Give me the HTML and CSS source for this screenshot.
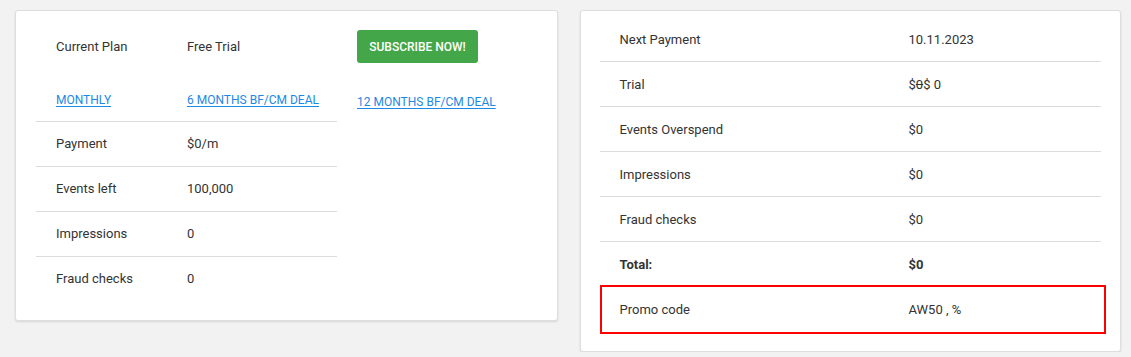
FILE: index.html
```html
<!DOCTYPE html>
<html>
<head>
<meta charset="utf-8">
<link rel="stylesheet" href="styles.css">
</head>
<body>
<div class="page">
  <div class="card plan-card">
    <div class="plan-grid">
      <div class="cell top">Current Plan</div>
      <div class="cell top">Free Trial</div>
      <div class="cell top btn-cell"><button class="btn-subscribe">SUBSCRIBE NOW!</button></div>

      <div class="cell link-row bordered"><a href="#" class="plan-link">MONTHLY</a></div>
      <div class="cell link-row bordered"><a href="#" class="plan-link">6 MONTHS BF/CM DEAL</a></div>
      <div class="cell link-row third"><a href="#" class="plan-link">12 MONTHS BF/CM DEAL</a></div>

      <div class="cell row bordered">Payment</div>
      <div class="cell row bordered">$0/m</div>
      <div class="cell row empty"></div>

      <div class="cell row bordered">Events left</div>
      <div class="cell row bordered">100,000</div>
      <div class="cell row empty"></div>

      <div class="cell row bordered">Impressions</div>
      <div class="cell row bordered">0</div>
      <div class="cell row empty"></div>

      <div class="cell row">Fraud checks</div>
      <div class="cell row">0</div>
      <div class="cell row empty"></div>
    </div>
  </div>

  <div class="card bill-card">
    <div class="bill-row bordered"><span class="lbl">Next Payment</span><span class="val">10.11.2023</span></div>
    <div class="bill-row bordered"><span class="lbl">Trial</span><span class="val">$<del>0</del>$ 0</span></div>
    <div class="bill-row bordered"><span class="lbl">Events Overspend</span><span class="val">$0</span></div>
    <div class="bill-row bordered"><span class="lbl">Impressions</span><span class="val">$0</span></div>
    <div class="bill-row bordered"><span class="lbl">Fraud checks</span><span class="val">$0</span></div>
    <div class="bill-row total"><span class="lbl">Total:</span><span class="val">$0</span></div>
    <div class="bill-row promo"><span class="lbl">Promo code</span><span class="val">AW50 , %</span></div>
  </div>
</div>
</body>
</html>
```

FILE: styles.css
```css
* { box-sizing: border-box; }

html, body {
  margin: 0;
  padding: 0;
  background: #f2f2f2;
}

body {
  font-family: Roboto, "Liberation Sans", Arial, sans-serif;
  font-size: 13px;
  color: #333;
}

.page {
  display: flex;
  align-items: flex-start;
  gap: 22px;
  padding: 10px 10px 0 15px;
}

.card {
  background: #fff;
  border: 1px solid #dedede;
  border-radius: 3px;
  box-shadow: 0 1px 2px rgba(0, 0, 0, 0.12);
}

.plan-card {
  width: 543px;
  height: 311px;
  padding: 19px 20px 19px 20px;
}

.plan-grid {
  display: grid;
  grid-template-columns: 131px 170px 1fr;
  grid-template-rows: 47px 45px 45px 45px 45px 45px;
}

.cell {
  padding-left: 20px;
  display: flex;
  align-items: center;
}

.cell.row {
  padding-bottom: 2px;
}

.cell.top {
  align-items: flex-start;
  line-height: 33px;
}

.bordered {
  border-bottom: 1px solid #dcdcdc;
}

.btn-cell {
  padding-left: 20px;
}

.btn-subscribe {
  height: 33px;
  width: 121px;
  border: none;
  border-radius: 3px;
  background: #43a648;
  color: #fff;
  font-family: Roboto, "Liberation Sans", Arial, sans-serif;
  font-size: 12px;
  font-weight: 500;
  padding: 0;
}

.plan-link {
  color: #1e88e5;
  font-size: 12px;
  text-decoration: underline;
  text-underline-offset: 2px;
}

.link-row {
  padding-top: 1px;
}

.link-row.third {
  padding-top: 4px;
}

.bill-card {
  width: 542px;
  height: 342px;
  padding: 6px 19px 18px 19px;
}

.bill-row {
  display: grid;
  grid-template-columns: 289px 1fr;
  height: 45px;
  align-items: center;
}

.bill-row .lbl,
.bill-row .val {
  padding-left: 20px;
}

.bill-row.total {
  font-weight: 700;
}

.bill-row.promo {
  position: relative;
}

.bill-row.promo::after {
  content: "";
  position: absolute;
  top: -2px;
  bottom: -2px;
  left: 0;
  right: -5px;
  border: 2px solid #f00;
  pointer-events: none;
}

del {
  text-decoration: line-through;
}
```
